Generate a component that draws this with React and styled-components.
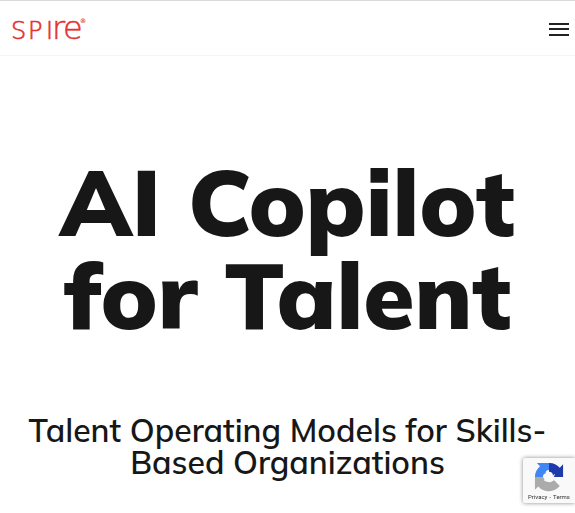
import React from 'react';
import styled, { createGlobalStyle } from 'styled-components';

const GlobalStyle = createGlobalStyle`
  * { box-sizing: border-box; }
  body {
    margin: 0;
    background: #fff;
    color: #171717;
    font-family: Muli, Mulish, "Open Sans", sans-serif;
  }
`;

const Header = styled.header`
  display: flex;
  align-items: center;
  justify-content: space-between;
  height: 56px;
  padding: 0 5px 0 10px;
  border-top: 1px solid #d9d9de;
  border-bottom: 1px solid #f5f5f5;
`;

const LogoLink = styled.a`
  display: flex;
  color: #e3322d;
  text-decoration: none;
`;

const LogoText = styled.text`
  fill: currentColor;
  stroke: currentColor;
  stroke-width: ${(p) => p.$stroke};
  font-family: "DejaVu Sans", "DejaVu Sans Light", sans-serif;
  font-weight: 200;
  font-size: ${(p) => p.$size}px;
`;

const MenuButton = styled.button`
  display: flex;
  padding: 4px 0 0;
  border: 0;
  background: none;
  color: #222;
  cursor: pointer;
`;

const Hero = styled.main`
  display: flex;
  flex-direction: column;
  align-items: center;
  gap: 73px;
  padding: 99px 20px 32px;
  text-align: center;
`;

const Title = styled.h1`
  margin: 0;
  max-width: 500px;
  font-size: 93px;
  line-height: 93px;
  font-weight: 900;
`;

const Subtitle = styled.h2`
  margin: 0;
  font-size: 32px;
  line-height: 32px;
  font-weight: 600;
`;

const Badge = styled.aside`
  position: fixed;
  right: 0;
  bottom: 10px;
  width: 52px;
  height: 45px;
  padding-top: 4px;
  display: flex;
  flex-direction: column;
  align-items: center;
  border-radius: 2px 0 0 2px;
  background: #f9f9f9;
  box-shadow: 0 0 4px #888;
`;

const BadgeLinks = styled.div`
  display: flex;
  gap: 2px;
  margin-top: 1px;
  font-family: Roboto, sans-serif;
  font-size: 6px;
  line-height: 8px;
  color: #333;
`;

const BadgeLink = styled.a`
  color: inherit;
  text-decoration: none;
`;

function Logo() {
  return (
    <LogoLink href="#" aria-label="Spire">
      <svg width="80" height="44" viewBox="0 0 80 44">
        <LogoText $size={24} $stroke={0.6} x="1 18 36" y="33">SPI</LogoText>
        <LogoText $size={32} $stroke={0.5} x="42 53" y="33">re</LogoText>
        <LogoText $size={6} $stroke={0.2} x="70" y="17">®</LogoText>
      </svg>
    </LogoLink>
  );
}

function RecaptchaMark() {
  return (
    <svg width="30" height="30" viewBox="0 0 64 64" aria-hidden="true">
      <path fill="#1c3aa9" d="M62 32V5l-7 7A30 30 0 0 0 32 2v19c5 0 7 2 8 6l-5 5z" />
      <path fill="#4285f4" d="M32 2H6l7 7A30 30 0 0 0 2 32h19l11-11z" />
      <path fill="#ababab" d="M2 32v27l7-7a30 30 0 0 0 46-1L43 39l-8 4-8-1-6-10z" />
      <path fill="#f9f9f9" d="M19 32c0-4 2-7 6-8-1-4 2-7 7-7v6c5-1 8 1 8 6l5-4-3 8c0 4-3 6-6 4 0 5-5 6-8 3-4 3-7 0-6-4z" />
    </svg>
  );
}

export default function App() {
  return (
    <>
      <GlobalStyle />
      <Header>
        <Logo />
        <MenuButton type="button" aria-label="Open menu">
          <svg width="21" height="16" viewBox="0 0 21 16" fill="currentColor">
            <rect x="0" y="1" width="20" height="2" />
            <rect x="0" y="6" width="20" height="2" />
            <rect x="0" y="12" width="20" height="2" />
          </svg>
        </MenuButton>
      </Header>
      <Hero>
        <Title>AI Copilot for Talent</Title>
        <Subtitle>Talent Operating Models for Skills-Based Organizations</Subtitle>
      </Hero>
      <Badge>
        <RecaptchaMark />
        <BadgeLinks>
          <BadgeLink href="#">Privacy</BadgeLink>
          <span>-</span>
          <BadgeLink href="#">Terms</BadgeLink>
        </BadgeLinks>
      </Badge>
    </>
  );
}
